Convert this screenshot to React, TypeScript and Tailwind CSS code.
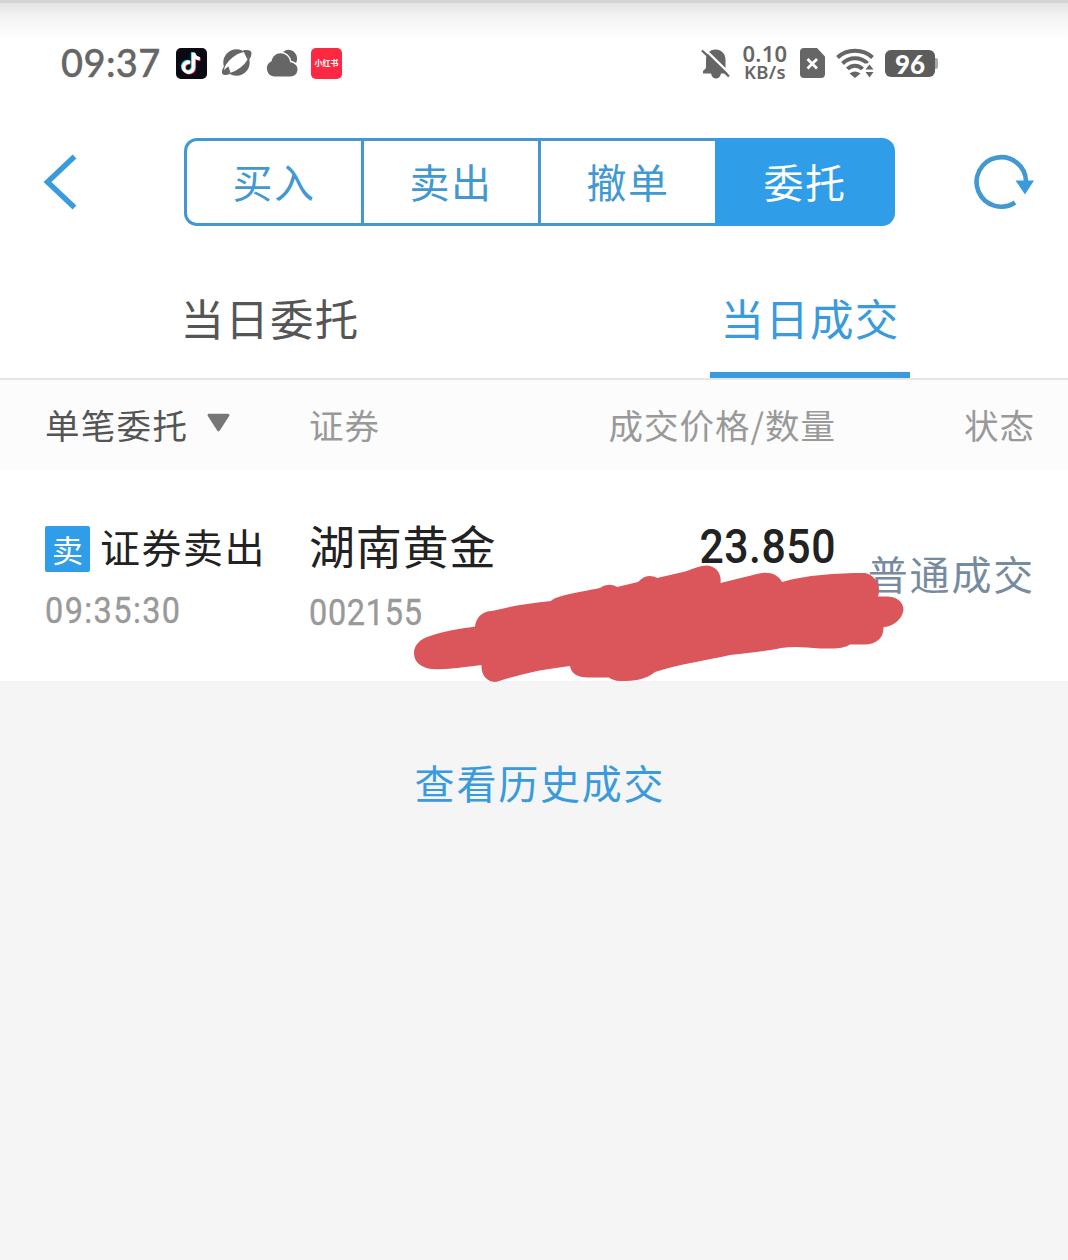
import React, { useState } from 'react';
import { clsx } from 'clsx';

const SEGMENTS = ['买入', '卖出', '撤单', '委托'];
const TABS = ['当日委托', '当日成交'];

function StatusBar() {
    return (
        <div className="h-[118px] shrink-0 border-t-[3px] border-[#d4d4d4] bg-[linear-gradient(to_bottom,#e2e2e2_0,#f2f2f2_12px,#fff_36px)] pl-[61px] pr-[130px] pt-[39px] font-[Lato,sans-serif] text-[#666]">
            <div className="flex h-[42px] items-center justify-between">
                <div className="flex items-center">
                    <span className="-mt-[2px] w-[115px] text-[38px] leading-[42px] font-medium tracking-[0.4px] [-webkit-text-stroke:0.4px_#666]">09:37</span>
                    <svg className="h-[31px] w-[31px]" viewBox="0 0 31 31">
                        <rect width="31" height="31" rx="5" fill="#0a0914" />
                        <g fill="none" strokeWidth="3.4">
                            <path d="M14 14.5a5 5 0 1 0 3.6 4.8V5c.4 3.5 2.8 5.5 6.2 5.8" stroke="#2af0ea" transform="translate(-1 -.8)" />
                            <path d="M14 14.5a5 5 0 1 0 3.6 4.8V5c.4 3.5 2.8 5.5 6.2 5.8" stroke="#fb2b54" transform="translate(.8 .6)" />
                            <path d="M14 14.5a5 5 0 1 0 3.6 4.8V5c.4 3.5 2.8 5.5 6.2 5.8" stroke="#fff" />
                        </g>
                    </svg>
                    <svg className="ml-[14px] h-[30px] w-[31px]" viewBox="0 0 31 30">
                        <circle cx="15.5" cy="14.5" r="13.2" fill="#666" />
                        <path d="M22 2.500C27 1.500 30.500 2.500 30.500 5c0 3-1.500 6-3.500 8zM4 17C1.500 20 .5 23 1 25c.8 2.500 4 2.500 8 1z" fill="#666" />
                        <ellipse cx="15.5" cy="14.5" rx="14.6" ry="6.4" transform="rotate(-38 15.5 14.5)" fill="#fff" />
                        <path d="M23 4.500c3-1.500 6-1.500 6 .5 0 2-1 4-2.500 6.500zM7.500 18.500C4 20.500 2 23 2.500 25c.7 1.500 4 1 7-.5z" fill="#666" />
                    </svg>
                    <svg className="ml-[14px] h-[30px] w-[32px]" viewBox="0 0 32 30">
                        <path d="M17 4C19.500 2 22 1.500 24 2c5 1 7.500 5.500 7 9.500-.3 2.500-1 4-2.500 5.500L20 14z" fill="#666" />
                        <path d="M8 28.500a8 8 0 0 1-2.500-15.200C6.500 8.500 10 5.300 14.500 5.300c5 0 9 3.500 9.700 9 4 .5 7.300 3 7.300 7 0 4.200-3 7.200-7 7.200z" fill="#666" stroke="#fff" strokeWidth="3" paintOrder="stroke" />
                    </svg>
                    <div className="ml-[13px] flex h-[31px] w-[31px] items-center justify-center rounded-[5px] bg-[#ff2842] font-['Noto_Sans_CJK_SC',sans-serif] text-[8px] leading-none font-bold text-white">
                        小红书
                    </div>
                </div>
                <div className="flex items-center">
                    <svg className="h-[32px] w-[29px]" viewBox="0 0 29 32">
                        <path d="M2 26.5v-2.500l3-3v-8.500C5 7 8.500 2.500 14.500 2.500S24.500 7 24.500 12.500V21l2.500 3v2.500h-7c-.5 3-2.500 5-5 5s-4.500-2-5-5z" fill="#666" />
                        <path d="M2.500 1 29.500 27.500" stroke="#fff" strokeWidth="2.400" />
                        <path d="M1 3.500 28 29.500" stroke="#666" strokeWidth="2.400" />
                    </svg>
                    <div className="-mt-[2px] ml-[11px] flex w-[48px] flex-col items-center font-['Noto_Sans',sans-serif] text-[#666]">
                        <span className="text-[22px] leading-[20px] font-semibold tracking-[0.3px]">0.10</span>
                        <span className="text-[18.5px] leading-[18px] font-semibold tracking-[0.3px]">KB/s</span>
                    </div>
                    <svg className="ml-[11px] h-[31px] w-[25px]" viewBox="0 0 25 31">
                        <path d="M4 0h13l8 8.500V26a4 4 0 0 1-4 4H4a4 4 0 0 1-4-4V4a4 4 0 0 1 4-4z" fill="#666" />
                        <path d="m7.500 11 9.500 9.500m0-9.500-9.500 9.500" stroke="#fff" strokeWidth="2.800" />
                    </svg>
                    <svg className="ml-[11px] h-[31px] w-[38px]" viewBox="0 0 38 31">
                        <g fill="none" stroke="#666" strokeWidth="4">
                            <path d="M1.500 9.500C11 .5 27 .5 36.500 9.500" />
                            <path d="M6.500 15.500c7-7 18-7 25 0" />
                            <path d="M11.500 21c4-4.500 11-4.500 15 0" />
                        </g>
                        <path d="M13.500 25.500q5.500-4 11 0L19 30z" fill="#666" />
                        <path d="M28.500 15.500H38V31h-9.500z" fill="#fff" />
                        <path d="M29.500 21.500 33.500 16.500l4 5zM29.500 24h8l-4 5.500z" fill="#666" />
                    </svg>
                    <div className="ml-[11px] flex h-[27px] w-[50px] items-center justify-center rounded-[6px] bg-[#5c5c5c] pt-[2px] text-[26px] leading-none font-black text-white">96</div>
                    <div className="h-[11px] w-[3px] rounded-r-[2px] bg-[#aaa]" />
                </div>
            </div>
        </div>
    );
}

function NavBar() {
    const [active, setActive] = useState(3);

    return (
        <div className="flex shrink-0 items-center pt-[20px] pr-[34px] pl-[43px]">
            <button>
                <svg className="h-[58px] w-[36px]" viewBox="0 0 36 58">
                    <path d="M31.5 3.500 4.500 29l27 25.500" fill="none" stroke="#3a9bdc" strokeWidth="5.400" />
                </svg>
            </button>
            <div className="ml-[105px] flex h-[88px] w-[711px]">
                {SEGMENTS.map((label, i) => (
                    <button
                        key={label}
                        onClick={() => setActive(i)}
                        className={clsx(
                            'flex-1 border-y-[3px] border-l-[3px] text-[40px] leading-[81px] tracking-[1.6px]',
                            i === 0 && 'rounded-l-[13px]',
                            i === SEGMENTS.length - 1 && 'rounded-r-[13px] border-r-[3px]',
                            active === i ? 'border-[#2f9de8] bg-[#2f9de8] text-white' : 'border-[#4299d1] text-[#4299d1]'
                        )}
                    >
                        <span className="block h-[82px]">{label}</span>
                    </button>
                ))}
            </div>
            <button className="ml-auto">
                <svg className="h-[58px] w-[62px]" viewBox="0 0 62 58">
                    <path d="M43 49.5A24.700 24.700 0 1 1 54 28.500" fill="none" stroke="#4299d1" strokeWidth="4.600" />
                    <path d="M43.500 27.500h18.500L53 41.500z" fill="#3a9bdc" />
                </svg>
            </button>
        </div>
    );
}

function Tabs() {
    const [active, setActive] = useState(1);

    return (
        <div className="mt-[34px] flex h-[120px] shrink-0 justify-between border-b-2 border-[#e6e6e6] pr-[158px] pl-[170px]">
            {TABS.map((label, i) => (
                <button
                    key={label}
                    onClick={() => setActive(i)}
                    className={clsx(
                        'w-[200px] border-b-[6px] pt-[3px] text-[43.5px] leading-[60px] tracking-[1.2px]',
                        active === i ? 'border-[#3a9bdc] text-[#3a9bdc]' : 'border-transparent text-[#555]'
                    )}
                >
                    {label}
                </button>
            ))}
        </div>
    );
}

function Scribble() {
    return (
        <svg className="absolute top-[94px] left-[410px] h-[122px] w-[500px]" viewBox="410 564 500 122">
            <path
                fill="#da565b"
                d="M414 653C414 645 420 639 430 636C444 631 459 629 475 626.5C476 618 482 611 492 611C512 606 530 603 551 601C556 596 574 593 600 588C606 584 612 584 617 587L638 582C645 575 651 575 657 578L683 572C691 570 699 565.5 707 565.5C716 566 722 574 720.5 583L757 574C768 571 778 574 782 582C806 575 836 573 865 573C874 575 882 584 878 596.5H888C898 597 903.5 603 903.5 610C902 620 892 627 883.5 627C884 638 876 644 866 644.5H850C845 648 836 649 820 648.5C805 647 793 646 781 648C767 651 750 653 730 655C708 660 676 665 655 672C645 680 635 681 620 681C615 681 611 679 609 677.5H588C577 677.5 571 673 570 666C544 669 520 674 496 682C487 682 481 675 481.5 665C463 667 449 670 432 669C421 668 414 662 414 653Z"
            />
        </svg>
    );
}

function Deals() {
    return (
        <>
            <div className="grid h-[90px] shrink-0 grid-cols-[264px_263px_264px_1fr] bg-[#fcfcfc] pr-[33px] pl-[45px] text-[34.5px] leading-[89px] tracking-[1px] whitespace-nowrap text-[#999]">
                <button className="-mt-[2px] flex items-center tracking-[1.3px] text-[#555]">
                    单笔委托
                    <svg className="-mt-[2px] ml-[18px] h-[20px] w-[25px]" viewBox="0 0 24 19">
                        <path d="M3 2h18L12 16z" fill="#777" stroke="#777" strokeWidth="3" strokeLinejoin="round" />
                    </svg>
                </button>
                <span>证券</span>
                <span className="text-right">成交价格/数量</span>
                <span className="text-right">状态</span>
            </div>
            <div className="relative grid h-[211px] shrink-0 grid-cols-[264px_263px_264px_1fr] bg-white pr-[33px] pl-[45px] whitespace-nowrap">
                <div className="pt-[46px]">
                    <div className="flex h-[60px] items-center text-[40px] tracking-[1.5px] text-[#222]">
                        <span className="mt-[5px] mr-[10px] flex h-[46px] w-[45px] items-center justify-center rounded-[2px] bg-[#2f9de8] text-[31px] leading-none tracking-normal text-white">卖</span>
                        证券卖出
                    </div>
                    <div className="origin-left scale-x-90 pt-[10px] font-[Roboto,sans-serif] text-[36px] leading-[50px] tracking-[1.6px] text-[#999] [-webkit-text-stroke:0.4px_#999]">09:35:30</div>
                </div>
                <div className="pt-[44px]">
                    <div className="text-[46px] leading-[60px] tracking-[0.8px] text-[#222]">湖南黄金</div>
                    <div className="origin-left scale-x-90 pt-[14px] font-[Roboto,sans-serif] text-[36px] leading-[50px] tracking-[0.8px] text-[#999] [-webkit-text-stroke:0.4px_#999]">002155</div>
                </div>
                <div className="origin-right scale-x-90 pt-[47px] text-right font-[Roboto,sans-serif] text-[47.5px] leading-[60px] font-medium tracking-[0.6px] text-[#222]">23.850</div>
                <div className="flex items-center justify-end pb-[5px] text-[40px] tracking-[1.8px] text-[#778ba0]">普通成交</div>
                <Scribble />
            </div>
        </>
    );
}

export default function App() {
    return (
        <div className="flex h-[1260px] w-[1068px] flex-col overflow-hidden bg-white font-['Noto_Sans_CJK_SC',sans-serif]">
            <StatusBar />
            <NavBar />
            <Tabs />
            <Deals />
            <div className="flex-1 bg-[#f5f5f5] pt-[71px] pl-[12px] text-center">
                <button className="text-[40px] leading-[60px] tracking-[1.8px] text-[#3a9bdc]">查看历史成交</button>
            </div>
        </div>
    );
}
